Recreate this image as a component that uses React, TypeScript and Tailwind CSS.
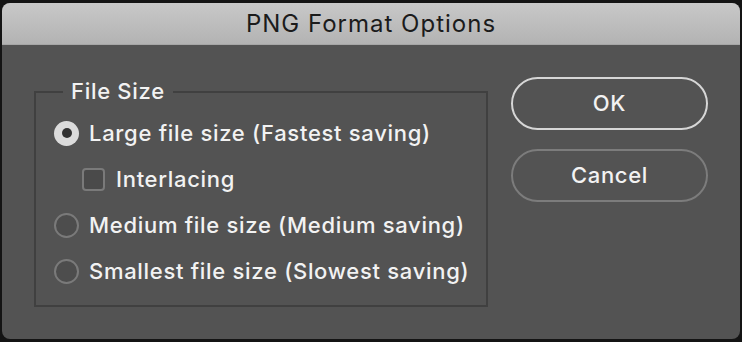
const Radio = ({ checked }: { checked?: boolean }) =>
  checked ? (
    <span className="w-[25px] h-[25px] rounded-full bg-[#dcdcdc] flex items-center justify-center shrink-0">
      <span className="w-[10px] h-[10px] rounded-full bg-[#333333]" />
    </span>
  ) : (
    <span className="w-[25px] h-[25px] rounded-full border-2 border-[#7a7a7a] bg-[#4d4d4d] shrink-0" />
  )

const rows = [
  { label: 'Large file size (Fastest saving)', checked: true },
  { label: 'Medium file size (Medium saving)' },
  { label: 'Smallest file size (Slowest saving)' },
]

export default function App() {
  return (
    <div
      className="min-h-screen bg-[#141414] pt-[3px] pl-[2px]"
      style={{ fontFamily: 'Inter, "Noto Sans", sans-serif' }}
    >
      <div className="w-[738px] h-[336px] rounded-[8px] overflow-hidden bg-[#535353] flex flex-col">
        <div className="h-[42px] shrink-0 bg-gradient-to-b from-[#c8c8c8] to-[#b3b3b3] border-b border-[#a6a6a6] flex items-center justify-center text-[24px] tracking-[1px] text-[#1b1b1b]">
          PNG Format Options
        </div>

        <div className="flex pl-[32px] pt-[46px] text-[#f2f2f2] text-[22px] font-medium tracking-[0.7px]">
          <div className="relative w-[454px] h-[216px] border-2 border-[#404040] pt-[17px] pl-[18px]">
            <span className="absolute left-[27px] -top-[14px] bg-[#535353] px-[8px] leading-[24px]">
              File Size
            </span>

            <div className="h-[46px] flex items-center gap-[10px]">
              <Radio checked />
              <span>{rows[0].label}</span>
            </div>
            <div className="h-[46px] flex items-center gap-[11px] pl-[28px]">
              <span className="w-[23px] h-[23px] rounded-[4px] border-2 border-[#7a7a7a] bg-[#4a4a4a] shrink-0" />
              <span>Interlacing</span>
            </div>
            {rows.slice(1).map((r, i) => (
              <div key={i} className="h-[46px] flex items-center gap-[10px]">
                <Radio />
                <span>{r.label}</span>
              </div>
            ))}
          </div>

          <div className="ml-[23px] -mt-[14px] flex flex-col gap-[19px]">
            <button className="w-[197px] h-[53px] rounded-full border-2 border-[#d6d6d6] tracking-[0.7px]">
              OK
            </button>
            <button className="w-[197px] h-[53px] rounded-full border-2 border-[#7c7c7c] tracking-[0.7px]">
              Cancel
            </button>
          </div>
        </div>
      </div>
    </div>
  )
}
